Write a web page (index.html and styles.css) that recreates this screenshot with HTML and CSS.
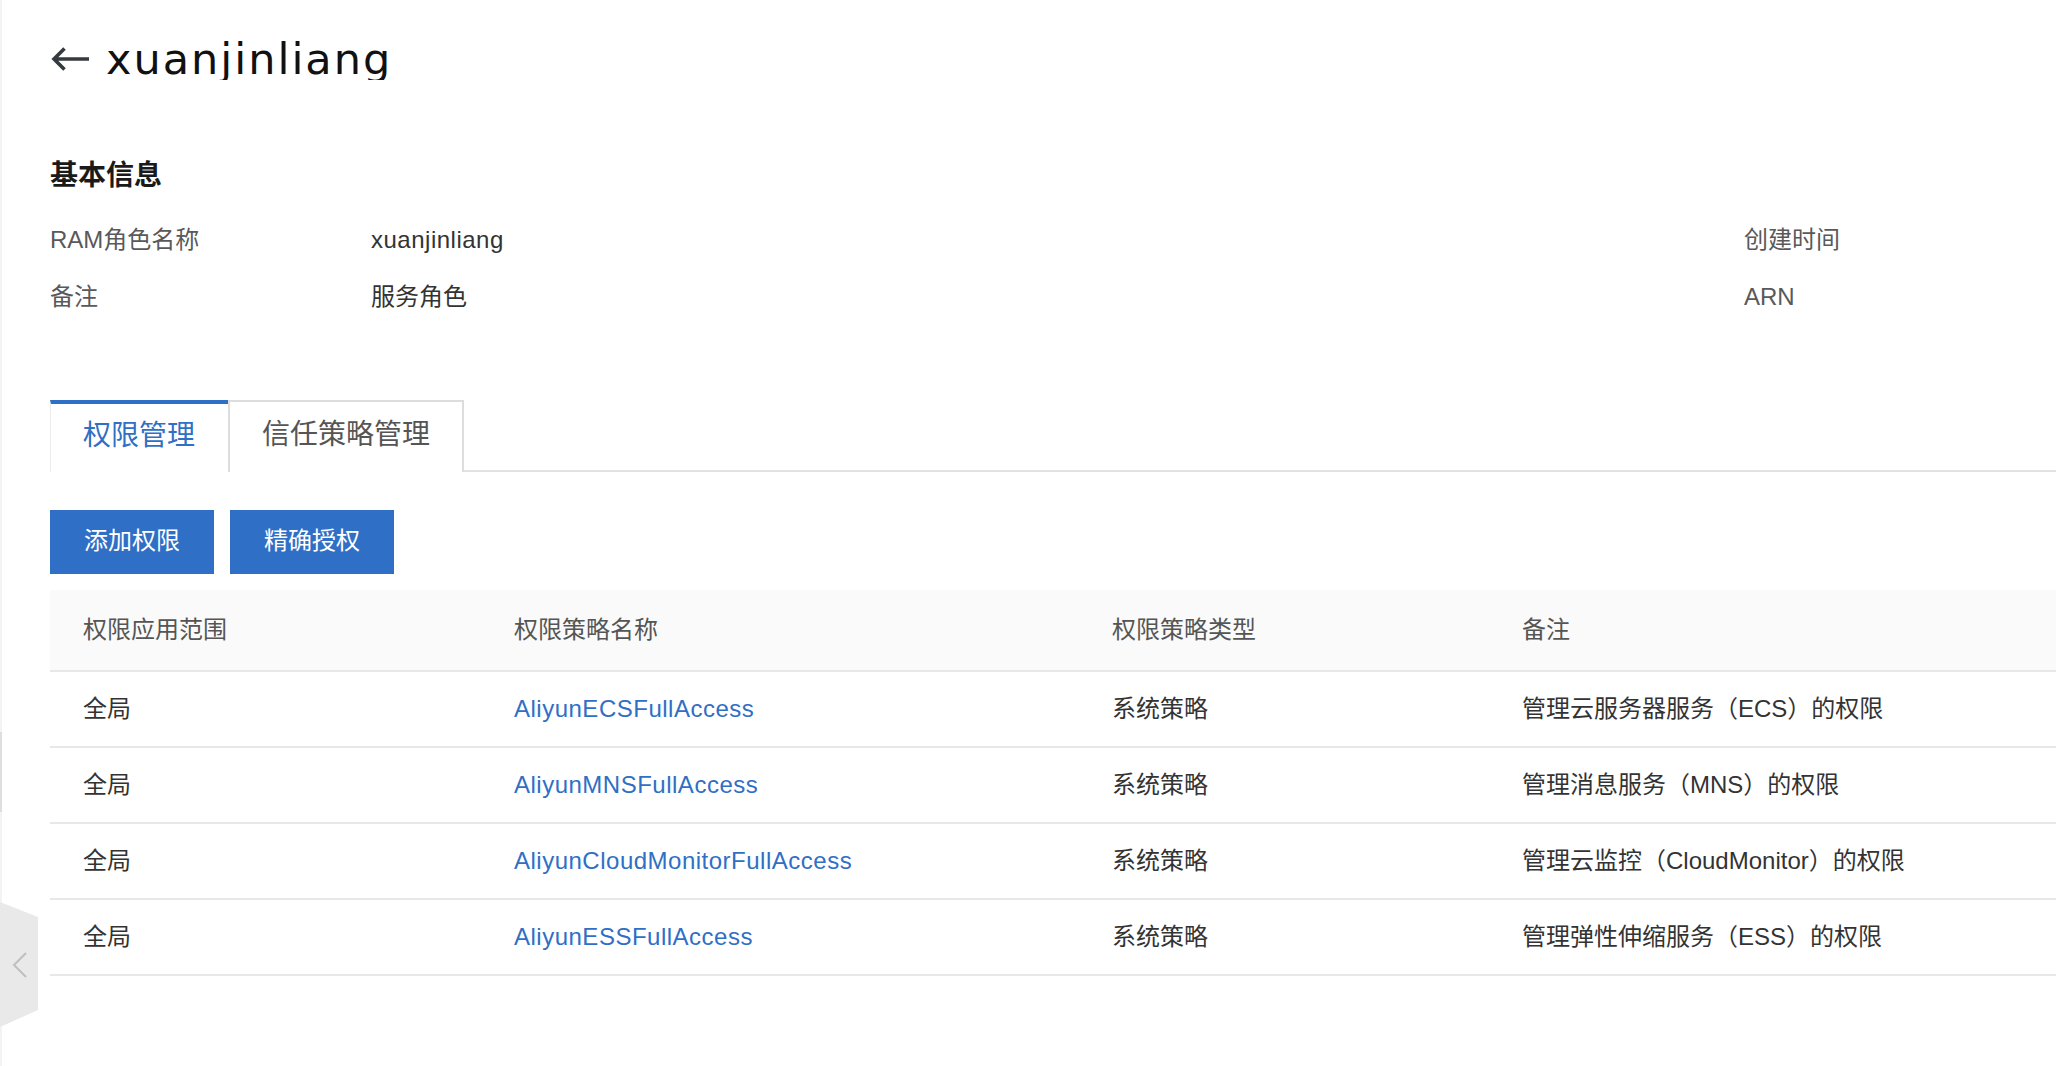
FILE: index.html
```html
<!DOCTYPE html>
<html lang="zh-CN">
<head>
<meta charset="utf-8">
<title>xuanjinliang</title>
<link rel="stylesheet" href="styles.css">
</head>
<body>
<div class="rail"><div class="rail-mark"></div></div>
<main class="page">
  <header class="page-header">
    <svg class="back" width="40" height="24" viewBox="0 0 40 24" aria-hidden="true">
      <path d="M39 12H4M14.5 1.5L4 12l10.5 10.5" fill="none" stroke="#353a3f" stroke-width="3.6" stroke-linecap="butt" stroke-linejoin="miter"/>
    </svg>
    <h1 class="title">xuanjinliang</h1>
  </header>

  <section class="basic">
    <h2 class="section-title">基本信息</h2>
    <div class="info-grid">
      <div class="info-label">RAM角色名称</div>
      <div class="info-value latin">xuanjinliang</div>
      <div class="info-label">创建时间</div>
      <div class="info-label">备注</div>
      <div class="info-value">服务角色</div>
      <div class="info-label">ARN</div>
    </div>
  </section>

  <nav class="tabs">
    <div class="tab active">权限管理</div>
    <div class="tab">信任策略管理</div>
  </nav>

  <div class="actions">
    <button class="btn">添加权限</button>
    <button class="btn">精确授权</button>
  </div>

  <div class="table">
    <div class="tr head">
      <div class="td">权限应用范围</div>
      <div class="td">权限策略名称</div>
      <div class="td">权限策略类型</div>
      <div class="td">备注</div>
    </div>
    <div class="tr">
      <div class="td">全局</div>
      <div class="td"><a class="link">AliyunECSFullAccess</a></div>
      <div class="td">系统策略</div>
      <div class="td">管理云服务器服务（ECS）的权限</div>
    </div>
    <div class="tr">
      <div class="td">全局</div>
      <div class="td"><a class="link">AliyunMNSFullAccess</a></div>
      <div class="td">系统策略</div>
      <div class="td">管理消息服务（MNS）的权限</div>
    </div>
    <div class="tr">
      <div class="td">全局</div>
      <div class="td"><a class="link">AliyunCloudMonitorFullAccess</a></div>
      <div class="td">系统策略</div>
      <div class="td">管理云监控（CloudMonitor）的权限</div>
    </div>
    <div class="tr">
      <div class="td">全局</div>
      <div class="td"><a class="link">AliyunESSFullAccess</a></div>
      <div class="td">系统策略</div>
      <div class="td">管理弹性伸缩服务（ESS）的权限</div>
    </div>
  </div>
</main>

<div class="collapse-handle">
  <svg width="38" height="125" viewBox="0 0 38 125" aria-hidden="true">
    <polygon points="0,0 38,15 38,108 0,125" fill="#e9e9e9"/>
    <polyline points="26,51 14,63 26,75" fill="none" stroke="#bfbfbf" stroke-width="2"/>
  </svg>
</div>
</body>
</html>
```

FILE: styles.css
```css
* { box-sizing: border-box; }

html, body {
  margin: 0;
  padding: 0;
  background: #ffffff;
}

body {
  display: flex;
  min-height: 1066px;
  overflow: hidden;
  font-family: "Liberation Sans", "Noto Sans CJK SC", sans-serif;
  font-size: 24px;
  line-height: 32px;
  color: #333333;
}

.rail {
  position: relative;
  width: 2px;
  flex: 0 0 2px;
  background: #f3f3f3;
}

.rail-mark {
  position: absolute;
  left: 0;
  top: 732px;
  width: 2px;
  height: 80px;
  background: #dedede;
}

.page {
  flex: 1;
  min-width: 0;
  padding-left: 48px;
}

/* header */
.page-header {
  display: flex;
  align-items: center;
  gap: 16px;
  height: 80px;
  padding-top: 38px;
  overflow: hidden;
}

.back {
  flex: 0 0 auto;
  display: block;
}

.title {
  margin: 0;
  font-family: "DejaVu Sans", "Noto Sans CJK SC", sans-serif;
  font-size: 43px;
  line-height: 44px;
  font-weight: 400;
  letter-spacing: 2px;
  color: #111111;
}

/* basic info */
.basic {
  padding-top: 76px;
}

.section-title {
  margin: 0;
  height: 40px;
  line-height: 40px;
  font-size: 28px;
  font-weight: 700;
  color: #1a1a1a;
}

.info-grid {
  margin-top: 15px;
  display: grid;
  grid-template-columns: 321px 1373px 1fr;
  grid-auto-rows: 57px;
  align-items: center;
}

.info-label {
  color: #595959;
  line-height: 57px;
}

.info-value {
  color: #333333;
  line-height: 57px;
}

.latin {
  letter-spacing: 0.5px;
}

/* tabs */
.tabs {
  margin-top: 75px;
  display: flex;
  border-bottom: 2px solid #e2e2e2;
  height: 72px;
}

.tab {
  height: 72px;
  margin-bottom: -2px;
  padding: 0 32px;
  font-size: 28px;
  line-height: 66px;
  color: #555555;
  border: 2px solid #dddddd;
  border-bottom: none;
  background: #ffffff;
}

.tab.active {
  padding: 0 33px 0 32px;
  color: #2f6fc5;
  border-top: 4px solid #2f6fc5;
  border-left: 1px solid #ececec;
  border-right: none;
  line-height: 64px;
}

/* actions */
.actions {
  margin-top: 38px;
  display: flex;
  gap: 16px;
}

.btn {
  width: 164px;
  height: 64px;
  padding: 0 0 3px;
  border: none;
  border-radius: 0;
  background: #2f70c6;
  color: #ffffff;
  font-family: inherit;
  font-size: 24px;
  line-height: 32px;
}

/* table */
.table {
  margin-top: 16px;
}

.tr {
  display: grid;
  grid-template-columns: 431px 598px 410px 1fr;
  height: 76px;
  border-bottom: 2px solid #e8e8e8;
  align-items: center;
}

.tr.head {
  height: 82px;
  background: #fafafa;
  color: #555555;
}

.td {
  padding-left: 33px;
  white-space: nowrap;
  line-height: 32px;
}

.link {
  color: #2f6fc5;
  text-decoration: none;
  letter-spacing: 0.5px;
}

/* side collapse handle */
.collapse-handle {
  position: absolute;
  left: 0;
  top: 902px;
  width: 38px;
  height: 125px;
}

.collapse-handle svg {
  display: block;
}
```
